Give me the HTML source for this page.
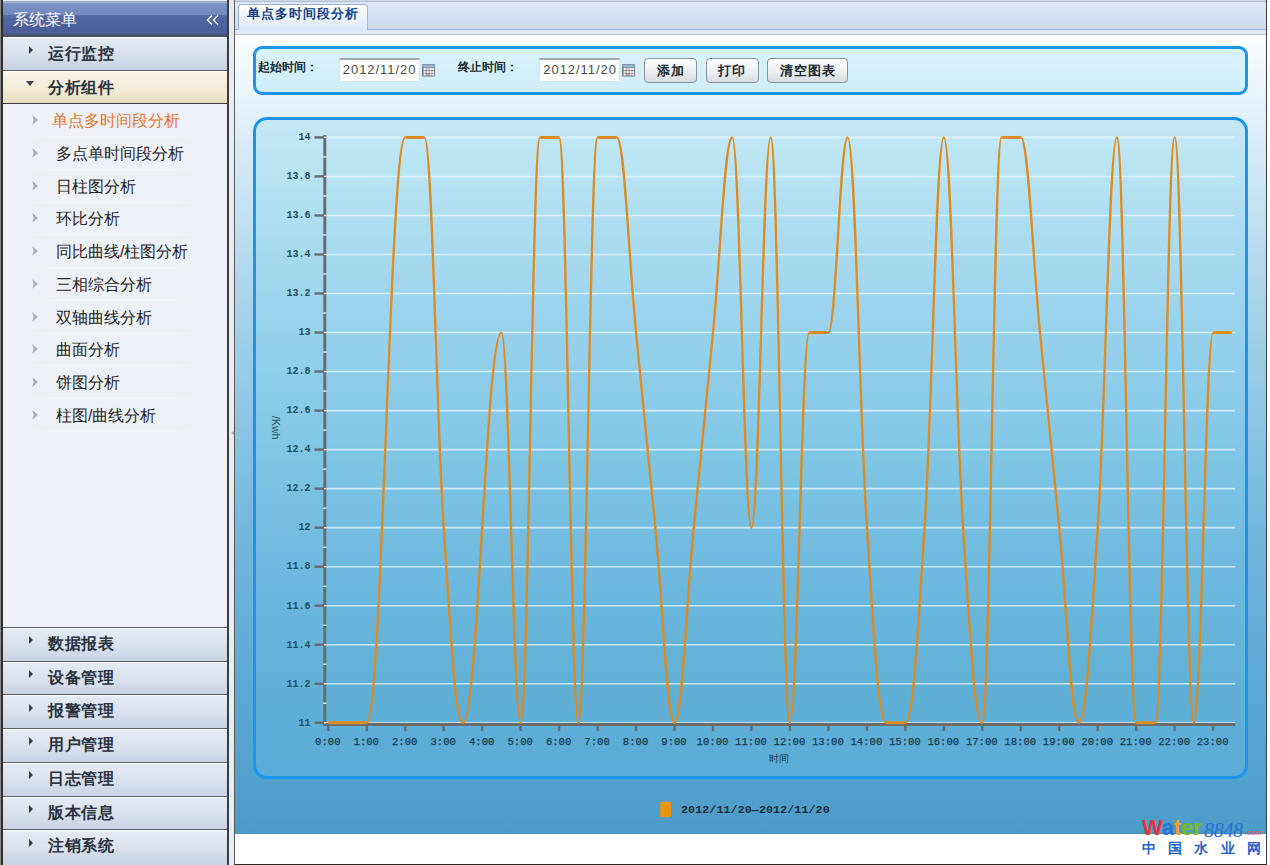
<!DOCTYPE html>
<html><head><meta charset="utf-8">
<style>
*{margin:0;padding:0;box-sizing:border-box}
html,body{width:1270px;height:865px;overflow:hidden;background:#ffffff;font-family:"Liberation Sans",sans-serif}
.abs{position:absolute}
#side{left:0;top:0;width:229px;height:865px;background:#eef1f8;border-left:3px solid #2e2e2e;border-right:2px solid #3c3c3c;box-shadow:inset 0 -2px 0 #333}
#shead{left:0;top:0;width:224px;height:37px;background:linear-gradient(#e2e9f7 0,#e2e9f7 1px,#9aa8c4 1px,#9aa8c4 2px,#aab9dc 2px,#7a92c4 4px,#7189bc 15px,#5a6ea8 15.5px,#4e66a0 18px,#4a5e98 33.5px,#4c5570 34.3px,#474d62 36.6px,#e6eaf2 36.6px)}
#shead .t{left:10px;top:9.5px;font-size:16px;color:#fff;letter-spacing:0px}
#shead .cc{left:204px;top:12px;width:16px;height:14px}
.mi{left:0;width:224px;height:34px;background:linear-gradient(#fbfcfd 0,#fbfcfd 1px,#e4eaf3 1.6px,#dae1ec 50%,#c7d1e3 100%);border-bottom:1.8px solid #585e66}
.mi .ar{position:absolute;left:26px;top:9px;width:0;height:0;border-top:4.7px solid transparent;border-bottom:4.7px solid transparent;border-left:4.8px solid #363c4c}
.mi .tx{position:absolute;left:45px;top:7px;font-size:16px;font-weight:bold;color:#2b3240;letter-spacing:0.5px}
.mi.on{background:linear-gradient(#fffefa 0,#fffefa 1px,#fbf4e8 1.6px,#f3ecd8 50%,#e8dec0 100%);border-bottom-color:#3e3e3e}
.mi.on .ar{left:23px;top:10.3px;border-left:4.5px solid transparent;border-right:4.5px solid transparent;border-top:5px solid #3a404e;border-bottom:0}
.si{left:0;width:224px;height:33px}
.si .ch{position:absolute;left:27.3px;top:10px;width:8px;height:12px}
.si .tx{position:absolute;left:53px;top:7px;font-size:16px;color:#262626}
.si .ln{position:absolute;left:18px;top:32px;width:182px;height:1px;background:linear-gradient(90deg,rgba(255,255,255,0),rgba(250,251,253,0.6) 20%,rgba(250,251,253,0.6) 80%,rgba(255,255,255,0))}
#split{left:229px;top:0;width:5px;height:865px;background:#e6ecf6}
#main{left:234px;top:0;width:1033px;height:865px;border-left:1px solid #5a5a5a;border-right:1px solid #3a3a3a;border-bottom:1.4px solid #2a2a2a;background:#fff}
#tabbar{left:0;top:0;width:1031px;height:35px;background:linear-gradient(#eef2fa 0,#aebcd6 1px,#aebcd6 1.8px,#e0e7f5 2px,#cfdaee 28.5px,#9cb6de 28.8px,#9cb6de 30px,#dde7f5 30px,#dde7f5 34px,#b7c8e2 34px,#b7c8e2 35px)}
#tab{left:3px;top:3.5px;width:130px;height:26px;border:1px solid #9ab4dc;border-bottom:0;border-radius:4px 4px 0 0;background:linear-gradient(#ffffff,#eef3fb 50%,#dbe5f4)}
#tab .tx{position:absolute;left:8px;top:0px;font-size:13px;font-weight:bold;color:#15428b;letter-spacing:1px}
#content{left:0;top:35px;width:1031px;height:799px;background:linear-gradient(#fbfdff 0px,#e8f4fb 65px,#d4e9f4 121px,#a8d4ea 271px,#8ac4e4 396px,#70b4da 521px,#5caad4 651px,#4f9fca 771px,#4c9bc7 797px,#4890bb 799px)}
#toolbar{left:18px;top:10.5px;width:995px;height:49px;border:3px solid #1a94ee;border-radius:9px;background:linear-gradient(#d8f3fb,#ceedf8)}
.lb{position:absolute;top:10.8px;font-size:12px;font-weight:bold;color:#1b2a30;font-family:"Liberation Serif",serif}
.inp{position:absolute;top:9.8px;width:81px;height:23.5px;background:#fff;border:1px solid #dfe3e6;border-top:2px solid #a6aaad}
.inp span{position:absolute;left:3.3px;top:1.6px;font-size:13px;letter-spacing:0.95px;color:#4a4a4a}
.cal{position:absolute;top:15.3px;width:13px;height:13px}.cal svg{position:absolute;left:0;top:0}
.btn{position:absolute;top:9.2px;height:25.2px;border:1px solid #8a9298;border-radius:4px;background:linear-gradient(#fcfdfd,#eef1f3 50%,#d5dbe0)}
.btn span{position:absolute;left:0;right:0;top:3.2px;text-align:center;font-size:13px;font-weight:bold;color:#1c2a30;letter-spacing:1px;font-family:"Liberation Serif",serif}
#chartbox{left:18px;top:82.2px;width:995px;height:662px;border:3px solid #1a94ee;border-radius:14px;background:linear-gradient(#c4e8f6 0%,#bde6f4 4.7%,#9cd4ee 28.3%,#7ec5e4 52%,#6cb8de 71%,#60b0d6 87.8%,#5aacd6 100%)}
#footer{left:0;top:834px;width:1031px;height:30px;background:#fff}
svg{position:absolute;left:0;top:0}
.yl{font-family:"Liberation Mono",monospace;font-size:10px;font-weight:bold;fill:#24505f}
.tt{font-size:10px;fill:#1c3a48}
.tt2{font-family:"Liberation Sans",sans-serif;font-size:10.5px;fill:#24505f}
.lg{font-family:"Liberation Mono",monospace;font-size:11.7px;letter-spacing:0.07px;font-weight:bold;fill:#1a2e3a}
#logo{left:1140px;top:815px;width:126px;height:46px}
#logo .w{position:absolute;left:2px;top:0px;font-size:22px;font-weight:bold;letter-spacing:-0.2px;font-family:"Liberation Sans",sans-serif;line-height:26px}
#logo .n{position:absolute;left:64px;top:1.5px;font-size:20px;font-style:italic;color:#2a6fd6;font-family:"Liberation Serif",serif;line-height:26px;letter-spacing:-0.3px}
#logo .c{position:absolute;left:104.5px;top:13px;font-size:8px;color:#e85050;line-height:10px}
#logo .cn{position:absolute;left:2px;top:25px;font-size:14px;font-weight:bold;color:#1e62c8;letter-spacing:12.2px;white-space:nowrap;line-height:16px}
.xl{font-family:"Liberation Mono",monospace;font-size:10.6px;fill:#173e4e;stroke:#173e4e;stroke-width:0.25}
</style></head>
<body>
<div class="abs" style="left:0;top:0;width:1.3px;height:865px;background:#8a8a8a;z-index:5"></div>
<div id="side" class="abs">
  <div id="shead" class="abs"><div class="t abs">系统菜单</div>
    <svg viewBox="0 0 14 10" width="14" height="10" style="position:absolute;left:202.5px;top:14.6px"><path d="M6 0.6 L1.4 5 L6 9.4 M12 0.6 L7.4 5 L12 9.4" fill="none" stroke="#fff" stroke-width="1.4"/></svg>
  </div>
  <div class="mi abs" style="top:36.6px;height:34.2px"><div class="ar"></div><div class="tx">运行监控</div></div>
  <div class="mi on abs" style="top:70.8px;height:33.6px"><div class="ar"></div><div class="tx">分析组件</div></div>
  <div class="abs" style="left:0;top:104.4px;width:224px;height:522px;background:#eef1f8">
    <div class="si abs" style="top:0.0px"><svg class="ch" viewBox="0 0 8 12" width="8" height="12"><path d="M2.3 1 L8 5.9 L2.3 10.8 L3.6 5.9 Z" fill="#a9afbb"/></svg><div class="tx" style="left:49px;color:#e8772a">单点多时间段分析</div><div class="ln"></div></div>
<div class="si abs" style="top:32.7px"><svg class="ch" viewBox="0 0 8 12" width="8" height="12"><path d="M2.3 1 L8 5.9 L2.3 10.8 L3.6 5.9 Z" fill="#a9afbb"/></svg><div class="tx">多点单时间段分析</div><div class="ln"></div></div>
<div class="si abs" style="top:65.4px"><svg class="ch" viewBox="0 0 8 12" width="8" height="12"><path d="M2.3 1 L8 5.9 L2.3 10.8 L3.6 5.9 Z" fill="#a9afbb"/></svg><div class="tx">日柱图分析</div><div class="ln"></div></div>
<div class="si abs" style="top:98.1px"><svg class="ch" viewBox="0 0 8 12" width="8" height="12"><path d="M2.3 1 L8 5.9 L2.3 10.8 L3.6 5.9 Z" fill="#a9afbb"/></svg><div class="tx">环比分析</div><div class="ln"></div></div>
<div class="si abs" style="top:130.8px"><svg class="ch" viewBox="0 0 8 12" width="8" height="12"><path d="M2.3 1 L8 5.9 L2.3 10.8 L3.6 5.9 Z" fill="#a9afbb"/></svg><div class="tx">同比曲线/柱图分析</div><div class="ln"></div></div>
<div class="si abs" style="top:163.5px"><svg class="ch" viewBox="0 0 8 12" width="8" height="12"><path d="M2.3 1 L8 5.9 L2.3 10.8 L3.6 5.9 Z" fill="#a9afbb"/></svg><div class="tx">三相综合分析</div><div class="ln"></div></div>
<div class="si abs" style="top:196.2px"><svg class="ch" viewBox="0 0 8 12" width="8" height="12"><path d="M2.3 1 L8 5.9 L2.3 10.8 L3.6 5.9 Z" fill="#a9afbb"/></svg><div class="tx">双轴曲线分析</div><div class="ln"></div></div>
<div class="si abs" style="top:228.9px"><svg class="ch" viewBox="0 0 8 12" width="8" height="12"><path d="M2.3 1 L8 5.9 L2.3 10.8 L3.6 5.9 Z" fill="#a9afbb"/></svg><div class="tx">曲面分析</div><div class="ln"></div></div>
<div class="si abs" style="top:261.6px"><svg class="ch" viewBox="0 0 8 12" width="8" height="12"><path d="M2.3 1 L8 5.9 L2.3 10.8 L3.6 5.9 Z" fill="#a9afbb"/></svg><div class="tx">饼图分析</div><div class="ln"></div></div>
<div class="si abs" style="top:294.3px"><svg class="ch" viewBox="0 0 8 12" width="8" height="12"><path d="M2.3 1 L8 5.9 L2.3 10.8 L3.6 5.9 Z" fill="#a9afbb"/></svg><div class="tx">柱图/曲线分析</div><div class="ln"></div></div>
  </div>
  <div class="mi abs" style="top:627.0px;border-top:1.8px solid #5a6068;height:35.7px;border-bottom:0"><div class="ar" style="top:8.3px"></div><div class="tx" style="top:6px">数据报表</div></div>
<div class="mi abs" style="top:660.7px;border-top:1.8px solid #5a6068;height:35.7px;border-bottom:0"><div class="ar" style="top:8.3px"></div><div class="tx" style="top:6px">设备管理</div></div>
<div class="mi abs" style="top:694.4px;border-top:1.8px solid #5a6068;height:35.7px;border-bottom:0"><div class="ar" style="top:8.3px"></div><div class="tx" style="top:6px">报警管理</div></div>
<div class="mi abs" style="top:728.2px;border-top:1.8px solid #5a6068;height:35.7px;border-bottom:0"><div class="ar" style="top:8.3px"></div><div class="tx" style="top:6px">用户管理</div></div>
<div class="mi abs" style="top:761.9px;border-top:1.8px solid #5a6068;height:35.7px;border-bottom:0"><div class="ar" style="top:8.3px"></div><div class="tx" style="top:6px">日志管理</div></div>
<div class="mi abs" style="top:795.6px;border-top:1.8px solid #5a6068;height:35.7px;border-bottom:0"><div class="ar" style="top:8.3px"></div><div class="tx" style="top:6px">版本信息</div></div>
<div class="mi abs" style="top:829.3px;border-top:1.8px solid #5a6068;height:35.7px;border-bottom:0"><div class="ar" style="top:8.3px"></div><div class="tx" style="top:6px">注销系统</div></div>
</div>
<div id="split" class="abs"><div class="abs" style="left:1.5px;top:430.5px;width:0;height:0;border-top:2.5px solid transparent;border-bottom:2.5px solid transparent;border-right:3px solid #a4acb6"></div></div>
<div id="main" class="abs">
  <div id="tabbar" class="abs"><div id="tab" class="abs"><div class="tx">单点多时间段分析</div></div></div>
  <div id="content" class="abs">
    <div id="toolbar" class="abs">
      <div class="lb" style="left:2px">起始时间：</div>
      <div class="inp" style="left:82.5px"><span>2012/11/20</span></div>
      <div class="cal" style="left:166px"><svg width="13" height="13" viewBox="0 0 13 13"><rect x="0" y="0" width="13" height="12.5" rx="1" fill="#6c7780"/><rect x="0.6" y="0.6" width="11.8" height="2.6" fill="#9cb6d6"/><g fill="#fbf7f7"><rect x="1.5" y="3.8" width="2.3" height="2.3"/><rect x="4.5" y="3.8" width="2.3" height="2.3" fill="#f6e0e4"/><rect x="7.5" y="3.8" width="2.3" height="2.3"/><rect x="10.2" y="3.8" width="2" height="2.3"/><rect x="1.5" y="6.8" width="2.3" height="2.3" fill="#efe4e0"/><rect x="4.5" y="6.8" width="2.3" height="2.3" fill="#f8e8e8"/><rect x="7.5" y="6.8" width="2.3" height="2.3" fill="#eee8e0"/><rect x="10.2" y="6.8" width="2" height="2.3"/><rect x="1.5" y="9.6" width="2.3" height="2" /><rect x="4.5" y="9.6" width="2.3" height="2" fill="#e8a0b0"/><rect x="7.5" y="9.6" width="2.3" height="2" fill="#f2dde2"/><rect x="10.2" y="9.6" width="2" height="2"/></g></svg></div>
      <div class="lb" style="left:202px">终止时间：</div>
      <div class="inp" style="left:283px"><span>2012/11/20</span></div>
      <div class="cal" style="left:366.3px"><svg width="13" height="13" viewBox="0 0 13 13"><rect x="0" y="0" width="13" height="12.5" rx="1" fill="#6c7780"/><rect x="0.6" y="0.6" width="11.8" height="2.6" fill="#9cb6d6"/><g fill="#fbf7f7"><rect x="1.5" y="3.8" width="2.3" height="2.3"/><rect x="4.5" y="3.8" width="2.3" height="2.3" fill="#f6e0e4"/><rect x="7.5" y="3.8" width="2.3" height="2.3"/><rect x="10.2" y="3.8" width="2" height="2.3"/><rect x="1.5" y="6.8" width="2.3" height="2.3" fill="#efe4e0"/><rect x="4.5" y="6.8" width="2.3" height="2.3" fill="#f8e8e8"/><rect x="7.5" y="6.8" width="2.3" height="2.3" fill="#eee8e0"/><rect x="10.2" y="6.8" width="2" height="2.3"/><rect x="1.5" y="9.6" width="2.3" height="2" /><rect x="4.5" y="9.6" width="2.3" height="2" fill="#e8a0b0"/><rect x="7.5" y="9.6" width="2.3" height="2" fill="#f2dde2"/><rect x="10.2" y="9.6" width="2" height="2"/></g></svg></div>
      <div class="btn" style="left:388px;width:53px"><span>添加</span></div>
      <div class="btn" style="left:449.5px;width:53px"><span>打印</span></div>
      <div class="btn" style="left:511px;width:81px"><span>清空图表</span></div>
    </div>
    <div id="chartbox" class="abs"></div>
  </div>
  <div id="footer" class="abs"></div>
</div>
<svg width="1270" height="865" viewBox="0 0 1270 865" style="position:absolute;left:0;top:0">
<line x1="325" y1="722.80" x2="1235" y2="722.80" stroke="#eaf6fb" stroke-opacity="0.72" stroke-width="1.6"/>
<line x1="325" y1="683.77" x2="1235" y2="683.77" stroke="#eaf6fb" stroke-opacity="0.72" stroke-width="1.6"/>
<line x1="325" y1="644.75" x2="1235" y2="644.75" stroke="#eaf6fb" stroke-opacity="0.72" stroke-width="1.6"/>
<line x1="325" y1="605.72" x2="1235" y2="605.72" stroke="#eaf6fb" stroke-opacity="0.72" stroke-width="1.6"/>
<line x1="325" y1="566.69" x2="1235" y2="566.69" stroke="#eaf6fb" stroke-opacity="0.72" stroke-width="1.6"/>
<line x1="325" y1="527.67" x2="1235" y2="527.67" stroke="#eaf6fb" stroke-opacity="0.72" stroke-width="1.6"/>
<line x1="325" y1="488.64" x2="1235" y2="488.64" stroke="#eaf6fb" stroke-opacity="0.72" stroke-width="1.6"/>
<line x1="325" y1="449.61" x2="1235" y2="449.61" stroke="#eaf6fb" stroke-opacity="0.72" stroke-width="1.6"/>
<line x1="325" y1="410.59" x2="1235" y2="410.59" stroke="#eaf6fb" stroke-opacity="0.72" stroke-width="1.6"/>
<line x1="325" y1="371.56" x2="1235" y2="371.56" stroke="#eaf6fb" stroke-opacity="0.72" stroke-width="1.6"/>
<line x1="325" y1="332.53" x2="1235" y2="332.53" stroke="#eaf6fb" stroke-opacity="0.72" stroke-width="1.6"/>
<line x1="325" y1="293.51" x2="1235" y2="293.51" stroke="#eaf6fb" stroke-opacity="0.72" stroke-width="1.6"/>
<line x1="325" y1="254.48" x2="1235" y2="254.48" stroke="#eaf6fb" stroke-opacity="0.72" stroke-width="1.6"/>
<line x1="325" y1="215.45" x2="1235" y2="215.45" stroke="#eaf6fb" stroke-opacity="0.72" stroke-width="1.6"/>
<line x1="325" y1="176.43" x2="1235" y2="176.43" stroke="#eaf6fb" stroke-opacity="0.72" stroke-width="1.6"/>
<line x1="325" y1="137.40" x2="1235" y2="137.40" stroke="#eaf6fb" stroke-opacity="0.72" stroke-width="1.6"/>
<line x1="324.8" y1="135" x2="324.8" y2="726" stroke="#6b6b6b" stroke-width="3"/>
<line x1="323.3" y1="724.4" x2="1235" y2="724.4" stroke="#6b6b6b" stroke-width="3"/>
<line x1="323.3" y1="722.80" x2="326.3" y2="722.80" stroke="#e8f4f8" stroke-width="1.4"/>
<line x1="323.3" y1="703.29" x2="326.3" y2="703.29" stroke="#e8f4f8" stroke-width="1.4"/>
<line x1="323.3" y1="683.77" x2="326.3" y2="683.77" stroke="#e8f4f8" stroke-width="1.4"/>
<line x1="323.3" y1="664.26" x2="326.3" y2="664.26" stroke="#e8f4f8" stroke-width="1.4"/>
<line x1="323.3" y1="644.75" x2="326.3" y2="644.75" stroke="#e8f4f8" stroke-width="1.4"/>
<line x1="323.3" y1="625.23" x2="326.3" y2="625.23" stroke="#e8f4f8" stroke-width="1.4"/>
<line x1="323.3" y1="605.72" x2="326.3" y2="605.72" stroke="#e8f4f8" stroke-width="1.4"/>
<line x1="323.3" y1="586.21" x2="326.3" y2="586.21" stroke="#e8f4f8" stroke-width="1.4"/>
<line x1="323.3" y1="566.69" x2="326.3" y2="566.69" stroke="#e8f4f8" stroke-width="1.4"/>
<line x1="323.3" y1="547.18" x2="326.3" y2="547.18" stroke="#e8f4f8" stroke-width="1.4"/>
<line x1="323.3" y1="527.67" x2="326.3" y2="527.67" stroke="#e8f4f8" stroke-width="1.4"/>
<line x1="323.3" y1="508.15" x2="326.3" y2="508.15" stroke="#e8f4f8" stroke-width="1.4"/>
<line x1="323.3" y1="488.64" x2="326.3" y2="488.64" stroke="#e8f4f8" stroke-width="1.4"/>
<line x1="323.3" y1="469.13" x2="326.3" y2="469.13" stroke="#e8f4f8" stroke-width="1.4"/>
<line x1="323.3" y1="449.61" x2="326.3" y2="449.61" stroke="#e8f4f8" stroke-width="1.4"/>
<line x1="323.3" y1="430.10" x2="326.3" y2="430.10" stroke="#e8f4f8" stroke-width="1.4"/>
<line x1="323.3" y1="410.59" x2="326.3" y2="410.59" stroke="#e8f4f8" stroke-width="1.4"/>
<line x1="323.3" y1="391.07" x2="326.3" y2="391.07" stroke="#e8f4f8" stroke-width="1.4"/>
<line x1="323.3" y1="371.56" x2="326.3" y2="371.56" stroke="#e8f4f8" stroke-width="1.4"/>
<line x1="323.3" y1="352.05" x2="326.3" y2="352.05" stroke="#e8f4f8" stroke-width="1.4"/>
<line x1="323.3" y1="332.53" x2="326.3" y2="332.53" stroke="#e8f4f8" stroke-width="1.4"/>
<line x1="323.3" y1="313.02" x2="326.3" y2="313.02" stroke="#e8f4f8" stroke-width="1.4"/>
<line x1="323.3" y1="293.51" x2="326.3" y2="293.51" stroke="#e8f4f8" stroke-width="1.4"/>
<line x1="323.3" y1="273.99" x2="326.3" y2="273.99" stroke="#e8f4f8" stroke-width="1.4"/>
<line x1="323.3" y1="254.48" x2="326.3" y2="254.48" stroke="#e8f4f8" stroke-width="1.4"/>
<line x1="323.3" y1="234.97" x2="326.3" y2="234.97" stroke="#e8f4f8" stroke-width="1.4"/>
<line x1="323.3" y1="215.45" x2="326.3" y2="215.45" stroke="#e8f4f8" stroke-width="1.4"/>
<line x1="323.3" y1="195.94" x2="326.3" y2="195.94" stroke="#e8f4f8" stroke-width="1.4"/>
<line x1="323.3" y1="176.43" x2="326.3" y2="176.43" stroke="#e8f4f8" stroke-width="1.4"/>
<line x1="323.3" y1="156.91" x2="326.3" y2="156.91" stroke="#e8f4f8" stroke-width="1.4"/>
<line x1="323.3" y1="137.40" x2="326.3" y2="137.40" stroke="#e8f4f8" stroke-width="1.4"/>
<line x1="314.5" y1="722.80" x2="324" y2="722.80" stroke="#6b6b6b" stroke-width="2.4"/>
<text x="310.5" y="725.60" text-anchor="end" class="yl">11</text>
<line x1="314.5" y1="683.77" x2="324" y2="683.77" stroke="#6b6b6b" stroke-width="2.4"/>
<text x="310.5" y="686.57" text-anchor="end" class="yl">11.2</text>
<line x1="314.5" y1="644.75" x2="324" y2="644.75" stroke="#6b6b6b" stroke-width="2.4"/>
<text x="310.5" y="647.55" text-anchor="end" class="yl">11.4</text>
<line x1="314.5" y1="605.72" x2="324" y2="605.72" stroke="#6b6b6b" stroke-width="2.4"/>
<text x="310.5" y="608.52" text-anchor="end" class="yl">11.6</text>
<line x1="314.5" y1="566.69" x2="324" y2="566.69" stroke="#6b6b6b" stroke-width="2.4"/>
<text x="310.5" y="569.49" text-anchor="end" class="yl">11.8</text>
<line x1="314.5" y1="527.67" x2="324" y2="527.67" stroke="#6b6b6b" stroke-width="2.4"/>
<text x="310.5" y="530.47" text-anchor="end" class="yl">12</text>
<line x1="314.5" y1="488.64" x2="324" y2="488.64" stroke="#6b6b6b" stroke-width="2.4"/>
<text x="310.5" y="491.44" text-anchor="end" class="yl">12.2</text>
<line x1="314.5" y1="449.61" x2="324" y2="449.61" stroke="#6b6b6b" stroke-width="2.4"/>
<text x="310.5" y="452.41" text-anchor="end" class="yl">12.4</text>
<line x1="314.5" y1="410.59" x2="324" y2="410.59" stroke="#6b6b6b" stroke-width="2.4"/>
<text x="310.5" y="413.39" text-anchor="end" class="yl">12.6</text>
<line x1="314.5" y1="371.56" x2="324" y2="371.56" stroke="#6b6b6b" stroke-width="2.4"/>
<text x="310.5" y="374.36" text-anchor="end" class="yl">12.8</text>
<line x1="314.5" y1="332.53" x2="324" y2="332.53" stroke="#6b6b6b" stroke-width="2.4"/>
<text x="310.5" y="335.33" text-anchor="end" class="yl">13</text>
<line x1="314.5" y1="293.51" x2="324" y2="293.51" stroke="#6b6b6b" stroke-width="2.4"/>
<text x="310.5" y="296.31" text-anchor="end" class="yl">13.2</text>
<line x1="314.5" y1="254.48" x2="324" y2="254.48" stroke="#6b6b6b" stroke-width="2.4"/>
<text x="310.5" y="257.28" text-anchor="end" class="yl">13.4</text>
<line x1="314.5" y1="215.45" x2="324" y2="215.45" stroke="#6b6b6b" stroke-width="2.4"/>
<text x="310.5" y="218.25" text-anchor="end" class="yl">13.6</text>
<line x1="314.5" y1="176.43" x2="324" y2="176.43" stroke="#6b6b6b" stroke-width="2.4"/>
<text x="310.5" y="179.23" text-anchor="end" class="yl">13.8</text>
<line x1="314.5" y1="137.40" x2="324" y2="137.40" stroke="#6b6b6b" stroke-width="2.4"/>
<text x="310.5" y="140.20" text-anchor="end" class="yl">14</text>
<line x1="328.30" y1="725" x2="328.30" y2="731" stroke="#6b6b6b" stroke-width="2.4"/>
<text x="327.80" y="745.3" text-anchor="middle" class="xl">0:00</text>
<line x1="366.77" y1="725" x2="366.77" y2="731" stroke="#6b6b6b" stroke-width="2.4"/>
<text x="366.27" y="745.3" text-anchor="middle" class="xl">1:00</text>
<line x1="405.24" y1="725" x2="405.24" y2="731" stroke="#6b6b6b" stroke-width="2.4"/>
<text x="404.74" y="745.3" text-anchor="middle" class="xl">2:00</text>
<line x1="443.71" y1="725" x2="443.71" y2="731" stroke="#6b6b6b" stroke-width="2.4"/>
<text x="443.21" y="745.3" text-anchor="middle" class="xl">3:00</text>
<line x1="482.18" y1="725" x2="482.18" y2="731" stroke="#6b6b6b" stroke-width="2.4"/>
<text x="481.68" y="745.3" text-anchor="middle" class="xl">4:00</text>
<line x1="520.65" y1="725" x2="520.65" y2="731" stroke="#6b6b6b" stroke-width="2.4"/>
<text x="520.15" y="745.3" text-anchor="middle" class="xl">5:00</text>
<line x1="559.12" y1="725" x2="559.12" y2="731" stroke="#6b6b6b" stroke-width="2.4"/>
<text x="558.62" y="745.3" text-anchor="middle" class="xl">6:00</text>
<line x1="597.59" y1="725" x2="597.59" y2="731" stroke="#6b6b6b" stroke-width="2.4"/>
<text x="597.09" y="745.3" text-anchor="middle" class="xl">7:00</text>
<line x1="636.06" y1="725" x2="636.06" y2="731" stroke="#6b6b6b" stroke-width="2.4"/>
<text x="635.56" y="745.3" text-anchor="middle" class="xl">8:00</text>
<line x1="674.53" y1="725" x2="674.53" y2="731" stroke="#6b6b6b" stroke-width="2.4"/>
<text x="674.03" y="745.3" text-anchor="middle" class="xl">9:00</text>
<line x1="713.00" y1="725" x2="713.00" y2="731" stroke="#6b6b6b" stroke-width="2.4"/>
<text x="712.50" y="745.3" text-anchor="middle" class="xl">10:00</text>
<line x1="751.47" y1="725" x2="751.47" y2="731" stroke="#6b6b6b" stroke-width="2.4"/>
<text x="750.97" y="745.3" text-anchor="middle" class="xl">11:00</text>
<line x1="789.94" y1="725" x2="789.94" y2="731" stroke="#6b6b6b" stroke-width="2.4"/>
<text x="789.44" y="745.3" text-anchor="middle" class="xl">12:00</text>
<line x1="828.41" y1="725" x2="828.41" y2="731" stroke="#6b6b6b" stroke-width="2.4"/>
<text x="827.91" y="745.3" text-anchor="middle" class="xl">13:00</text>
<line x1="866.88" y1="725" x2="866.88" y2="731" stroke="#6b6b6b" stroke-width="2.4"/>
<text x="866.38" y="745.3" text-anchor="middle" class="xl">14:00</text>
<line x1="905.35" y1="725" x2="905.35" y2="731" stroke="#6b6b6b" stroke-width="2.4"/>
<text x="904.85" y="745.3" text-anchor="middle" class="xl">15:00</text>
<line x1="943.82" y1="725" x2="943.82" y2="731" stroke="#6b6b6b" stroke-width="2.4"/>
<text x="943.32" y="745.3" text-anchor="middle" class="xl">16:00</text>
<line x1="982.29" y1="725" x2="982.29" y2="731" stroke="#6b6b6b" stroke-width="2.4"/>
<text x="981.79" y="745.3" text-anchor="middle" class="xl">17:00</text>
<line x1="1020.76" y1="725" x2="1020.76" y2="731" stroke="#6b6b6b" stroke-width="2.4"/>
<text x="1020.26" y="745.3" text-anchor="middle" class="xl">18:00</text>
<line x1="1059.23" y1="725" x2="1059.23" y2="731" stroke="#6b6b6b" stroke-width="2.4"/>
<text x="1058.73" y="745.3" text-anchor="middle" class="xl">19:00</text>
<line x1="1097.70" y1="725" x2="1097.70" y2="731" stroke="#6b6b6b" stroke-width="2.4"/>
<text x="1097.20" y="745.3" text-anchor="middle" class="xl">20:00</text>
<line x1="1136.17" y1="725" x2="1136.17" y2="731" stroke="#6b6b6b" stroke-width="2.4"/>
<text x="1135.67" y="745.3" text-anchor="middle" class="xl">21:00</text>
<line x1="1174.64" y1="725" x2="1174.64" y2="731" stroke="#6b6b6b" stroke-width="2.4"/>
<text x="1174.14" y="745.3" text-anchor="middle" class="xl">22:00</text>
<line x1="1213.11" y1="725" x2="1213.11" y2="731" stroke="#6b6b6b" stroke-width="2.4"/>
<text x="1212.61" y="745.3" text-anchor="middle" class="xl">23:00</text>
<clipPath id="pc"><rect x="326" y="132" width="912" height="594"/></clipPath>
<path d="M328.30 722.80 C328.30 722.80 351.38 722.80 366.77 722.80 C382.16 722.80 389.85 137.40 405.24 137.40 C412.93 137.40 416.78 137.40 424.48 137.40 C432.17 137.40 436.02 410.59 443.71 527.67 C451.40 644.75 455.25 722.80 462.94 722.80 C478.33 722.80 486.03 332.53 501.42 332.53 C509.11 332.53 512.96 722.80 520.65 722.80 C528.34 722.80 532.19 137.40 539.88 137.40 C547.58 137.40 551.43 137.40 559.12 137.40 C566.81 137.40 570.66 722.80 578.36 722.80 C586.05 722.80 589.90 137.40 597.59 137.40 C605.28 137.40 609.13 137.40 616.83 137.40 C624.52 137.40 628.37 254.48 636.06 332.53 C643.75 410.59 647.60 449.61 655.30 527.67 C662.99 605.72 666.84 722.80 674.53 722.80 C682.22 722.80 686.07 605.72 693.76 527.67 C701.46 449.61 705.31 410.59 713.00 332.53 C720.69 254.48 724.54 137.40 732.24 137.40 C739.93 137.40 743.78 527.67 751.47 527.67 C759.16 527.67 763.01 137.40 770.70 137.40 C778.40 137.40 782.25 722.80 789.94 722.80 C797.63 722.80 801.48 332.53 809.17 332.53 C816.87 332.53 820.72 332.53 828.41 332.53 C836.10 332.53 839.95 137.40 847.64 137.40 C855.34 137.40 859.19 410.59 866.88 527.67 C874.57 644.75 878.42 722.80 886.12 722.80 C893.81 722.80 897.66 722.80 905.35 722.80 C913.04 722.80 916.89 644.75 924.59 527.67 C932.28 410.59 936.13 137.40 943.82 137.40 C951.51 137.40 955.36 410.59 963.06 527.67 C970.75 644.75 974.60 722.80 982.29 722.80 C989.98 722.80 993.83 137.40 1001.53 137.40 C1009.22 137.40 1013.07 137.40 1020.76 137.40 C1028.45 137.40 1032.30 254.48 1039.99 332.53 C1047.69 410.59 1051.54 449.61 1059.23 527.67 C1066.92 605.72 1070.77 722.80 1078.46 722.80 C1086.16 722.80 1090.01 644.75 1097.70 527.67 C1105.39 410.59 1109.24 137.40 1116.93 137.40 C1124.63 137.40 1128.48 722.80 1136.17 722.80 C1143.86 722.80 1147.71 722.80 1155.40 722.80 C1163.10 722.80 1166.95 137.40 1174.64 137.40 C1182.33 137.40 1186.18 722.80 1193.88 722.80 C1201.57 722.80 1205.42 332.53 1213.11 332.53 C1220.80 332.53 1232.35 332.53 1232.35 332.53" fill="none" stroke="#df8b1f" stroke-width="2.3" stroke-linejoin="round"/>
<line x1="329.30" y1="722.80" x2="365.77" y2="722.80" stroke="#de8a1c" stroke-width="2.9"/>
<line x1="406.24" y1="137.40" x2="423.48" y2="137.40" stroke="#de8a1c" stroke-width="2.9"/>
<line x1="540.88" y1="137.40" x2="558.12" y2="137.40" stroke="#de8a1c" stroke-width="2.9"/>
<line x1="598.59" y1="137.40" x2="615.83" y2="137.40" stroke="#de8a1c" stroke-width="2.9"/>
<line x1="810.17" y1="332.53" x2="827.41" y2="332.53" stroke="#de8a1c" stroke-width="2.9"/>
<line x1="887.12" y1="722.80" x2="904.35" y2="722.80" stroke="#de8a1c" stroke-width="2.9"/>
<line x1="1002.53" y1="137.40" x2="1019.76" y2="137.40" stroke="#de8a1c" stroke-width="2.9"/>
<line x1="1137.17" y1="722.80" x2="1154.40" y2="722.80" stroke="#de8a1c" stroke-width="2.9"/>
<line x1="1214.11" y1="332.53" x2="1231.35" y2="332.53" stroke="#de8a1c" stroke-width="2.9"/>
<text x="779" y="762" text-anchor="middle" class="tt">时间</text>
<text transform="translate(271.5,416) rotate(90)" class="tt2">/Kwh</text>
<rect x="660.2" y="801.7" width="10.8" height="15.6" fill="#ea920c" rx="1"/>
<text x="681" y="813" class="lg">2012/11/20—2012/11/20</text>
</svg>
<div id="logo" class="abs"><div class="w"><span style="color:#e8343c">W</span><span style="color:#2a72d8">a</span><span style="color:#f2a218">t</span><span style="color:#7ab828">er</span></div><div class="n">8848</div><div class="c">.com</div><div class="cn">中国水业网</div></div>
</body></html>
